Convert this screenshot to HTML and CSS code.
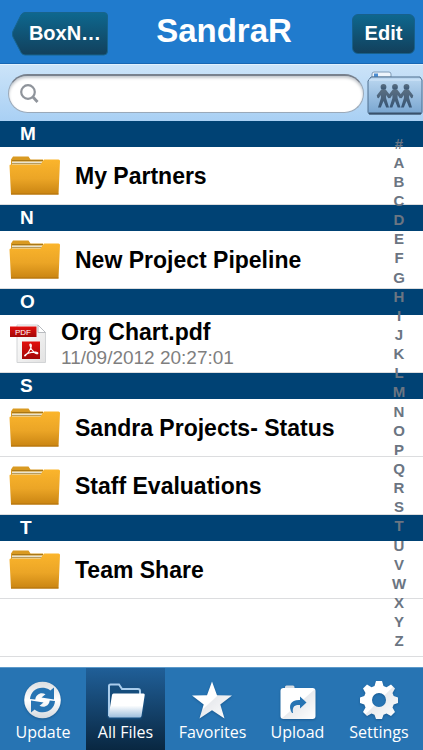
FILE: index.html
```html
<!DOCTYPE html>
<html lang="en">
<head>
<meta charset="utf-8">
<meta name="viewport" content="width=device-width, initial-scale=1">
<title>SandraR</title>
<link rel="stylesheet" href="styles.css">
</head>
<body>
<svg class="defs" aria-hidden="true">
  <defs>
    <linearGradient id="gold" x1="0" y1="0" x2="0" y2="1"><stop offset="0" stop-color="#fbb52c"/><stop offset=".55" stop-color="#eba526"/><stop offset="1" stop-color="#c98412"/></linearGradient>
    <linearGradient id="silver" x1="0" y1="0" x2="1" y2="1"><stop offset="0" stop-color="#fff"/><stop offset=".5" stop-color="#fff"/><stop offset=".52" stop-color="#e9ebee"/><stop offset="1" stop-color="#fff"/></linearGradient>
    <linearGradient id="sheen" x1="0" y1="0" x2="0" y2="1"><stop offset="0" stop-color="#fff"/><stop offset=".5" stop-color="#fff"/><stop offset="1" stop-color="#9ebfdd"/></linearGradient>
    <linearGradient id="ring" x1="0" y1="0" x2="0" y2="1"><stop offset="0" stop-color="#dcdee1"/><stop offset=".5" stop-color="#fff"/><stop offset="1" stop-color="#d5d9de"/></linearGradient>
    <linearGradient id="share" x1="0" y1="0" x2="0" y2="1"><stop offset="0" stop-color="#bcd8f1"/><stop offset="1" stop-color="#78a5d0"/></linearGradient>
    <linearGradient id="people" x1="0" y1="0" x2="0" y2="1"><stop offset="0" stop-color="#5a6f82"/><stop offset="1" stop-color="#385574"/></linearGradient>
    <linearGradient id="red" x1="0" y1="0" x2="0" y2="1"><stop offset="0" stop-color="#e3100d"/><stop offset="1" stop-color="#a30808"/></linearGradient>
    <linearGradient id="paper" x1="0" y1="0" x2="1" y2="1"><stop offset="0" stop-color="#fff"/><stop offset="1" stop-color="#e2e2e2"/></linearGradient>
    <linearGradient id="teal" x1="0" y1="0" x2="0" y2="1"><stop offset="0" stop-color="#0e688f"/><stop offset="1" stop-color="#12405c"/></linearGradient>
    <symbol id="folder" viewBox="0 0 52 40">
      <path d="M2 14V3.500L4 .5H19.500L21.500 3.500H34V10H2Z" fill="#d99a22"/>
      <path d="M3 4.500H34" stroke="#a97716" stroke-width="1"/>
      <path d="M3 5.500H34L32 9H3Z" fill="#e9e3cf"/>
      <path d="M3 7.500H33" stroke="#b79b5c" stroke-width="1"/>
      <path d="M0.500 9.500Q0.500 8.500 2 8.500H31.500L35 3.500H49.500Q51 3.500 51 5L49.500 38.500H2Z" fill="url(#gold)"/>
      <path d="M2 38H49.500" stroke="#b2730d" stroke-width="1"/>
    </symbol>
    <symbol id="pdf" viewBox="0 0 38 42">
      <path d="M8 2H29L36.500 9.500V39.500H8Z" fill="url(#paper)" stroke="#d2d4d6"/>
      <path d="M29 2V9.500H36.500Z" fill="#fff" stroke="#b9bcc0"/>
      <path d="M1 3.500H27.500V14H1Z" fill="url(#red)"/>
      <path d="M13 18.500H31V36H13Z" fill="url(#red)"/>
      <path d="M21.500 21C23.500 21 21.800 28 16.200 32.700C15 33.500 15.500 31.500 20 30C25 28.300 29 29.300 28.800 30.300C28.300 32 22 28.500 21 22.500C20.800 21.300 21 21 21.500 21Z" fill="none" stroke="#fff" stroke-width="1.200"/>
      <text x="6" y="11.500" class="pdf-tag">PDF</text>
    </symbol>
    <g id="person">
      <circle cx="0" cy="3" r="2.900"/>
      <path d="M-2.200 5.500H2.200L6.800 11.500L6 14L4.800 14.200L2.600 11V14L5.500 23.500H2.700L0 17L-2.700 23.500H-5.500L-2.600 14V11L-4.800 14.200L-6 14L-6.800 11.500Z"/>
    </g>
  </defs>
</svg>
<div class="app">
  <header class="navbar">
    <button class="back" type="button">
      <svg class="back-shape" viewBox="0 0 96 44" preserveAspectRatio="none" aria-hidden="true"><path d="M13 .5H92Q95.500 .5 95.500 4V39Q95.500 43 92 43H13Q10.500 43 9 40.500L1 25Q-.5 22 1 19L9 3Q10.500 .5 13 .5Z" fill="url(#teal)" stroke="#17648d"/></svg>
      <span class="back-text">BoxN…</span>
    </button>
    <h1 class="title">SandraR</h1>
    <button class="edit" type="button">Edit</button>
  </header>
  <div class="searchbar">
    <label class="field">
      <svg class="lens" viewBox="0 0 20 20" aria-hidden="true"><circle cx="8" cy="8" r="6.800" fill="none" stroke="#8f949b" stroke-width="2.200"/><path d="M12.500 12.500L17.500 18" stroke="#8f949b" stroke-width="2.800"/></svg>
      <input class="search" type="search" aria-label="Search">
    </label>
    <button class="shared" type="button" aria-label="Shared folders">
      <svg class="shared-icon" viewBox="0 0 56 44" aria-hidden="true">
        <path d="M5 6V3Q5 1 7 1H22Q24 1 24 3V6Z" fill="#eef5fc" stroke="#7f9cb8"/>
        <path d="M7 2.500H11V6H7Z" fill="#4b8dd2"/>
        <path d="M1 10L4 6H53L55 9V41Q55 43 53 43H3Q1 43 1 41Z" fill="url(#share)" stroke="#4f6e8e"/>
        <path d="M2 9H54" stroke="#d7eafb"/><path d="M2 42.500H54" stroke="#3a526c" stroke-width="2"/>
        <g fill="url(#people)"><use href="#person" x="16.500" y="13"/><use href="#person" x="28" y="13"/><use href="#person" x="39.500" y="13"/></g>
      </svg>
    </button>
  </div>
  <main class="files">
    <h2 class="section">M</h2>
    <ul class="rows"><li class="row"><svg class="folder" aria-hidden="true"><use href="#folder"/></svg><span class="name">My Partners</span></li></ul>
    <h2 class="section">N</h2>
    <ul class="rows"><li class="row"><svg class="folder" aria-hidden="true"><use href="#folder"/></svg><span class="name">New Project Pipeline</span></li></ul>
    <h2 class="section">O</h2>
    <ul class="rows"><li class="row document"><svg class="pdf" aria-hidden="true"><use href="#pdf"/></svg><div class="info"><span class="name">Org Chart.pdf</span><time class="date">11/09/2012 20:27:01</time></div></li></ul>
    <h2 class="section">S</h2>
    <ul class="rows">
      <li class="row"><svg class="folder" aria-hidden="true"><use href="#folder"/></svg><span class="name">Sandra Projects- Status</span></li>
      <li class="row"><svg class="folder" aria-hidden="true"><use href="#folder"/></svg><span class="name">Staff Evaluations</span></li>
    </ul>
    <h2 class="section">T</h2>
    <ul class="rows">
      <li class="row"><svg class="folder" aria-hidden="true"><use href="#folder"/></svg><span class="name">Team Share</span></li>
      <li class="row"></li>
    </ul>
    <nav class="index" aria-label="Alphabet">
      <span>#</span><span>A</span><span>B</span><span>C</span><span>D</span><span>E</span><span>F</span><span>G</span><span>H</span><span>I</span><span>J</span><span>K</span><span>L</span><span>M</span><span>N</span><span>O</span><span>P</span><span>Q</span><span>R</span><span>S</span><span>T</span><span>U</span><span>V</span><span>W</span><span>X</span><span>Y</span><span>Z</span>
    </nav>
  </main>
  <nav class="tabs" aria-label="Main">
    <button class="tab" type="button">
      <svg class="tab-icon" viewBox="0 0 40 40" aria-hidden="true">
        <circle cx="19.500" cy="20" r="18.300" fill="url(#ring)"/>
        <g fill="#2774b3"><path d="M7 19C7.500 11.500 14 6.800 21 7.800C23.800 8.200 25.800 9.200 27.300 10.600L31 7.500V19.500L18.500 17.500L22.500 14.200C18 11.800 13 14 12.300 19.500Z"/><path d="M32 21C31.500 28.500 25 33.200 18 32.200C15.200 31.800 13.200 30.800 11.700 29.400L8 32.500V20.500L20.500 22.500L16.500 25.800C21 28.200 26 26 26.700 20.500Z"/></g>
      </svg>
      <span>Update</span>
    </button>
    <button class="tab active" type="button" aria-current="page">
      <svg class="tab-icon" viewBox="0 0 40 40" aria-hidden="true">
        <path d="M3 36V6Q3 4.500 4.500 4.500H13L16 9H32Q34 9 34 11V16" fill="#164d7c" stroke="#a9cceb" stroke-width="2"/>
        <path d="M7.500 13.500H37.500Q39 13.500 38.700 15L35.500 36Q35.200 37.500 33.700 37.500H4Q2.300 37.500 2.600 36L6 15Q6.200 13.500 7.500 13.500Z" fill="url(#sheen)"/>
      </svg>
      <span>All Files</span>
    </button>
    <button class="tab" type="button">
      <svg class="tab-icon" viewBox="0 0 40 40" aria-hidden="true"><path d="M19 1.500L24 15.200L39 15.400L27.300 24.500L31.500 38.500L19 30.200L6.500 38.500L10.700 24.500L-1 15.400L14 15.200Z" fill="url(#silver)"/></svg>
      <span>Favorites</span>
    </button>
    <button class="tab" type="button">
      <svg class="tab-icon" viewBox="0 0 40 40" aria-hidden="true">
        <path d="M7 10V7Q7 5.500 8.500 5.500H15Q16.500 5.500 16.500 7V10Z" fill="#d8dde3"/>
        <rect x="2.500" y="8" width="35" height="31" rx="3" fill="url(#silver)"/>
        <path d="M14 33C9.500 25.500 13 19.500 22 20V16.500L28.500 22.500L22 28.500V25C17 24.500 14 26.500 15 33Z" fill="#2774b3"/>
      </svg>
      <span>Upload</span>
    </button>
    <button class="tab" type="button">
      <svg class="tab-icon" viewBox="0 0 40 40" aria-hidden="true">
        <path fill="url(#silver)" fill-rule="evenodd" d="M17 1H23L24.500 6L27.500 7.200L32 4.500L36 8.500L33.500 13L34.700 16L39 17.500V23L34.700 24.500L33.500 27.500L36 32L32 36L27.500 33.500L24.500 34.700L23 39H17L15.500 34.700L12.500 33.500L8 36L4 32L6.500 27.500L5.300 24.500L1 23V17.500L5.300 16L6.500 13L4 8.500L8 4.500L12.500 7.200L15.500 6ZM20 13A7 7 0 1 0 20 27A7 7 0 1 0 20 13Z"/>
      </svg>
      <span>Settings</span>
    </button>
  </nav>
</div>
</body>
</html>
```
FILE: styles.css
```css
* {
  box-sizing: border-box;
}

body {
  margin: 0;
  background: #fff;
  font-family: "Liberation Sans", Arial, sans-serif;
}

button {
  margin: 0;
  padding: 0;
  border: 0;
  background: none;
  color: #fff;
  font-family: inherit;
}

.defs {
  position: absolute;
  width: 0;
  height: 0;
}

.app {
  display: flex;
  flex-direction: column;
  min-height: 100vh;
}

.navbar {
  display: grid;
  grid-template-columns: auto 1fr auto;
  align-items: center;
  height: 64px;
  padding: 4px 8px 0 12px;
  background: #207bcd;
  border-bottom: 1px solid #1767b4;
}

.back {
  position: relative;
  width: 96px;
  height: 44px;
  padding-left: 10px;
  font-size: 20px;
  font-weight: bold;
}

.back-shape {
  position: absolute;
  inset: 0;
  width: 100%;
  height: 100%;
}

.back-text {
  position: relative;
}

.title {
  margin: 0;
  padding: 0 12px 6px 0;
  color: #fff;
  font-size: 33px;
  line-height: 40px;
  text-align: center;
}

.edit {
  width: 63px;
  height: 40px;
  border: 1px solid #17608c;
  border-radius: 6px;
  background: linear-gradient(#0e678e, #12405c);
  font-size: 20px;
  font-weight: bold;
}

.searchbar {
  display: flex;
  align-items: center;
  gap: 3px;
  height: 57px;
  padding-left: 8px;
  background: linear-gradient(#cbe3f8, #a9d0f4);
  border-top: 1px solid #e2f1fd;
}

.field {
  display: flex;
  flex: 1;
  align-items: center;
  height: 39px;
  padding: 0 11px;
  border: 1px solid #9aa9b9;
  border-top: 2px solid #78818d;
  border-radius: 20px;
  background: #fff;
  box-shadow: inset 0 2px 3px #c3c7cc;
}

.lens {
  flex: none;
  width: 20px;
  height: 20px;
}

.search {
  flex: 1;
  min-width: 0;
  padding: 0 8px;
  border: 0;
  outline: 0;
  background: none;
  font: 20px "Liberation Sans", Arial, sans-serif;
}

.shared,
.shared-icon {
  display: block;
  width: 56px;
  height: 44px;
}

.files {
  position: relative;
  flex: 1;
  padding-bottom: 10px;
}

.section {
  height: 26px;
  margin: 0;
  padding-left: 20px;
  background: #004274;
  color: #fff;
  font-size: 19px;
  line-height: 26px;
}

.rows {
  margin: 0;
  padding: 0;
  list-style: none;
}

.row {
  display: flex;
  align-items: center;
  gap: 14px;
  height: 58px;
  padding-left: 9px;
  border-bottom: 1px solid #dcdddf;
}

.folder {
  flex: none;
  width: 52px;
  height: 40px;
}

.pdf {
  flex: none;
  width: 38px;
  height: 42px;
}

.pdf-tag {
  fill: #fff;
  font: 8px "Liberation Sans", Arial, sans-serif;
}

.info {
  display: flex;
  flex-direction: column;
}

.name {
  color: #000;
  font-size: 23px;
  font-weight: bold;
  line-height: 28px;
}

.date {
  color: #7f7f7f;
  font-size: 19px;
  line-height: 24px;
}

.index {
  position: absolute;
  inset: 13px 14px 16px auto;
  display: flex;
  flex-direction: column;
  width: 20px;
  color: #6b7582;
  font-size: 15px;
  font-weight: bold;
  text-align: center;
}

.index span {
  display: flex;
  flex: 1;
  align-items: center;
  justify-content: center;
  line-height: 16px;
}

.tabs {
  display: grid;
  grid-template-columns: 86fr 79fr 95fr 75fr 88fr;
  height: 83px;
  background: #2774b3;
  border-top: 1px solid #5d9aca;
}

.tab {
  display: flex;
  flex-direction: column;
  align-items: center;
  padding-top: 12px;
  font-family: "Open Sans", "Noto Sans", sans-serif;
  font-size: 16px;
  line-height: 24px;
}

.active {
  background: linear-gradient(#205f98, #092741);
}

.tab-icon {
  width: 40px;
  height: 40px;
  overflow: visible;
  filter: drop-shadow(0 1px 1px #1a5a91);
}
```
